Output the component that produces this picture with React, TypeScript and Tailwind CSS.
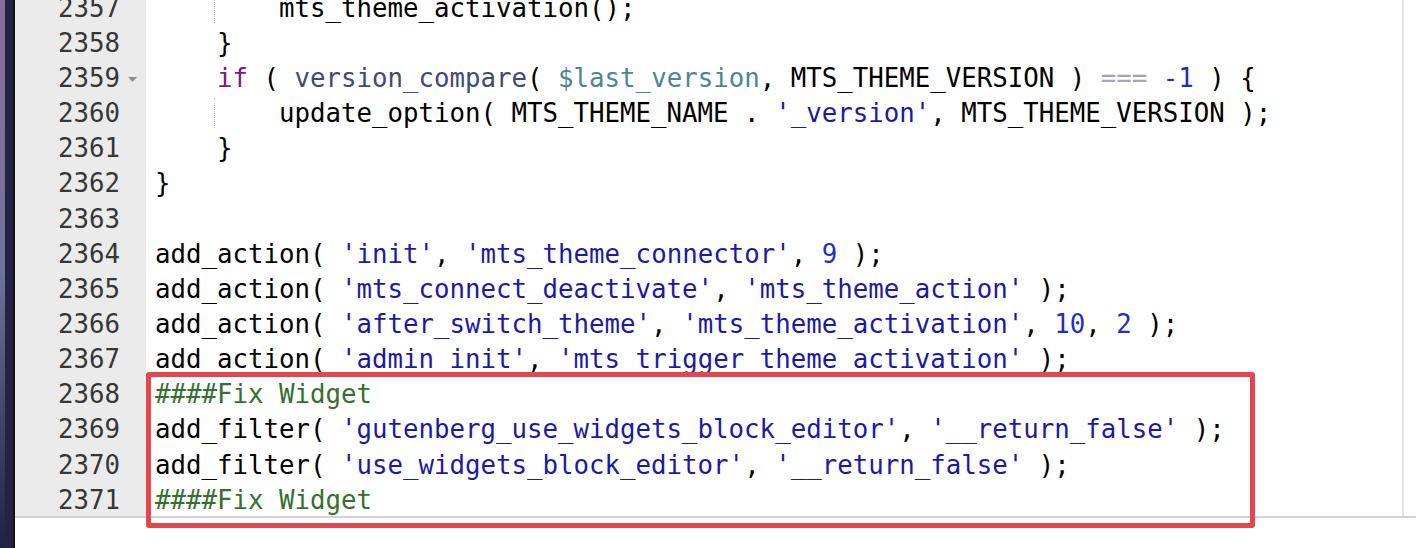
import React from "react";

type Tok = { t: string; c?: string };

const STR = "text-[#1a1aa6]";
const NUM = "text-[#1f2fc4]";
const CMT = "text-[#35702f]";

const lines: { n: number; guide?: boolean; fold?: boolean; toks: Tok[] }[] = [
    { n: 2357, guide: true, toks: [{ t: "mts_theme_activation();" }] },
    { n: 2358, toks: [{ t: "    }" }] },
    {
        n: 2359,
        fold: true,
        toks: [
            { t: "    " },
            { t: "if", c: "text-[#7a1c7f]" },
            { t: " ( " },
            { t: "version_compare", c: "text-[#3e4a78]" },
            { t: "( " },
            { t: "$last_version", c: "text-[#4b8596]" },
            { t: ", MTS_THEME_VERSION ) " },
            { t: "===", c: "text-[#a3a3ba]" },
            { t: " " },
            { t: "-1", c: NUM },
            { t: " ) {" },
        ],
    },
    {
        n: 2360,
        guide: true,
        toks: [
            { t: "update_option( MTS_THEME_NAME . " },
            { t: "'_version'", c: STR },
            { t: ", MTS_THEME_VERSION );" },
        ],
    },
    { n: 2361, toks: [{ t: "    }" }] },
    { n: 2362, toks: [{ t: "}" }] },
    { n: 2363, toks: [{ t: "" }] },
    {
        n: 2364,
        toks: [
            { t: "add_action( " },
            { t: "'init'", c: STR },
            { t: ", " },
            { t: "'mts_theme_connector'", c: STR },
            { t: ", " },
            { t: "9", c: NUM },
            { t: " );" },
        ],
    },
    {
        n: 2365,
        toks: [
            { t: "add_action( " },
            { t: "'mts_connect_deactivate'", c: STR },
            { t: ", " },
            { t: "'mts_theme_action'", c: STR },
            { t: " );" },
        ],
    },
    {
        n: 2366,
        toks: [
            { t: "add_action( " },
            { t: "'after_switch_theme'", c: STR },
            { t: ", " },
            { t: "'mts_theme_activation'", c: STR },
            { t: ", " },
            { t: "10", c: NUM },
            { t: ", " },
            { t: "2", c: NUM },
            { t: " );" },
        ],
    },
    {
        n: 2367,
        toks: [
            { t: "add_action( " },
            { t: "'admin_init'", c: STR },
            { t: ", " },
            { t: "'mts_trigger_theme_activation'", c: STR },
            { t: " );" },
        ],
    },
    { n: 2368, toks: [{ t: "####Fix Widget", c: CMT }] },
    {
        n: 2369,
        toks: [
            { t: "add_filter( " },
            { t: "'gutenberg_use_widgets_block_editor'", c: STR },
            { t: ", " },
            { t: "'__return_false'", c: STR },
            { t: " );" },
        ],
    },
    {
        n: 2370,
        toks: [
            { t: "add_filter( " },
            { t: "'use_widgets_block_editor'", c: STR },
            { t: ", " },
            { t: "'__return_false'", c: STR },
            { t: " );" },
        ],
    },
    { n: 2371, toks: [{ t: "####Fix Widget", c: CMT }] },
];

export default function App() {
    return (
        <div className="relative flex w-[1416px] h-[548px] overflow-hidden bg-white font-['DejaVu_Sans_Mono',monospace] text-[25.75px] leading-[35.15px]">
            {/* desktop edge + window border */}
            <div className="flex w-[15px] shrink-0">
                <div className="w-[5px] bg-gradient-to-b from-[#8a6b9c] via-[#6e7399] to-[#1f2242]" />
                <div className="w-[8px] bg-[#23243f]" />
                <div className="w-[2px] bg-[#111118]" />
            </div>

            <div className="flex flex-col flex-1">
                <div className="flex h-[518px] overflow-hidden border-b-2 border-[#d2d2d2]">
                    <div className="flex-1 overflow-hidden">
                        <div className="-mt-[9.3px]">
                            {lines.map((l) => (
                                <div key={l.n} className="flex h-[35.15px]">
                                    <div className="flex w-[131px] shrink-0 justify-end bg-[#ebebeb] text-[#363636]">
                                        <span>{l.n}</span>
                                        <div className="flex w-[26px] items-center justify-center">
                                            {l.fold && (
                                                <svg width="9" height="5" viewBox="0 0 9 5" className="-ml-[1px] mt-[1px]">
                                                    <path d="M0 0 H9 L4.5 5 Z" fill="#8c8c8c" />
                                                </svg>
                                            )}
                                        </div>
                                    </div>
                                    <div className="pl-[9px] whitespace-pre text-black">
                                        {l.guide && (
                                            <>
                                                <span>{"    "}</span>
                                                <span className="-ml-[3px] pl-[2px] border-l border-dotted border-[#c4c4c4]">{"    "}</span>
                                            </>
                                        )}
                                        {l.toks.map((tk, i) => (
                                            <span key={i} className={tk.c}>
                                                {tk.t}
                                            </span>
                                        ))}
                                    </div>
                                </div>
                            ))}
                        </div>
                    </div>
                    <div className="w-[2px] bg-[#e6e6e6]" />
                    <div className="w-[12px] bg-white" />
                </div>
                <div className="flex-1 bg-white" />
            </div>

            {/* highlight annotation */}
            <div className="absolute left-[146px] top-[372px] w-[1109px] h-[156px] border-[5px] border-[#e1474c] rounded-[3px]" />
        </div>
    );
}
